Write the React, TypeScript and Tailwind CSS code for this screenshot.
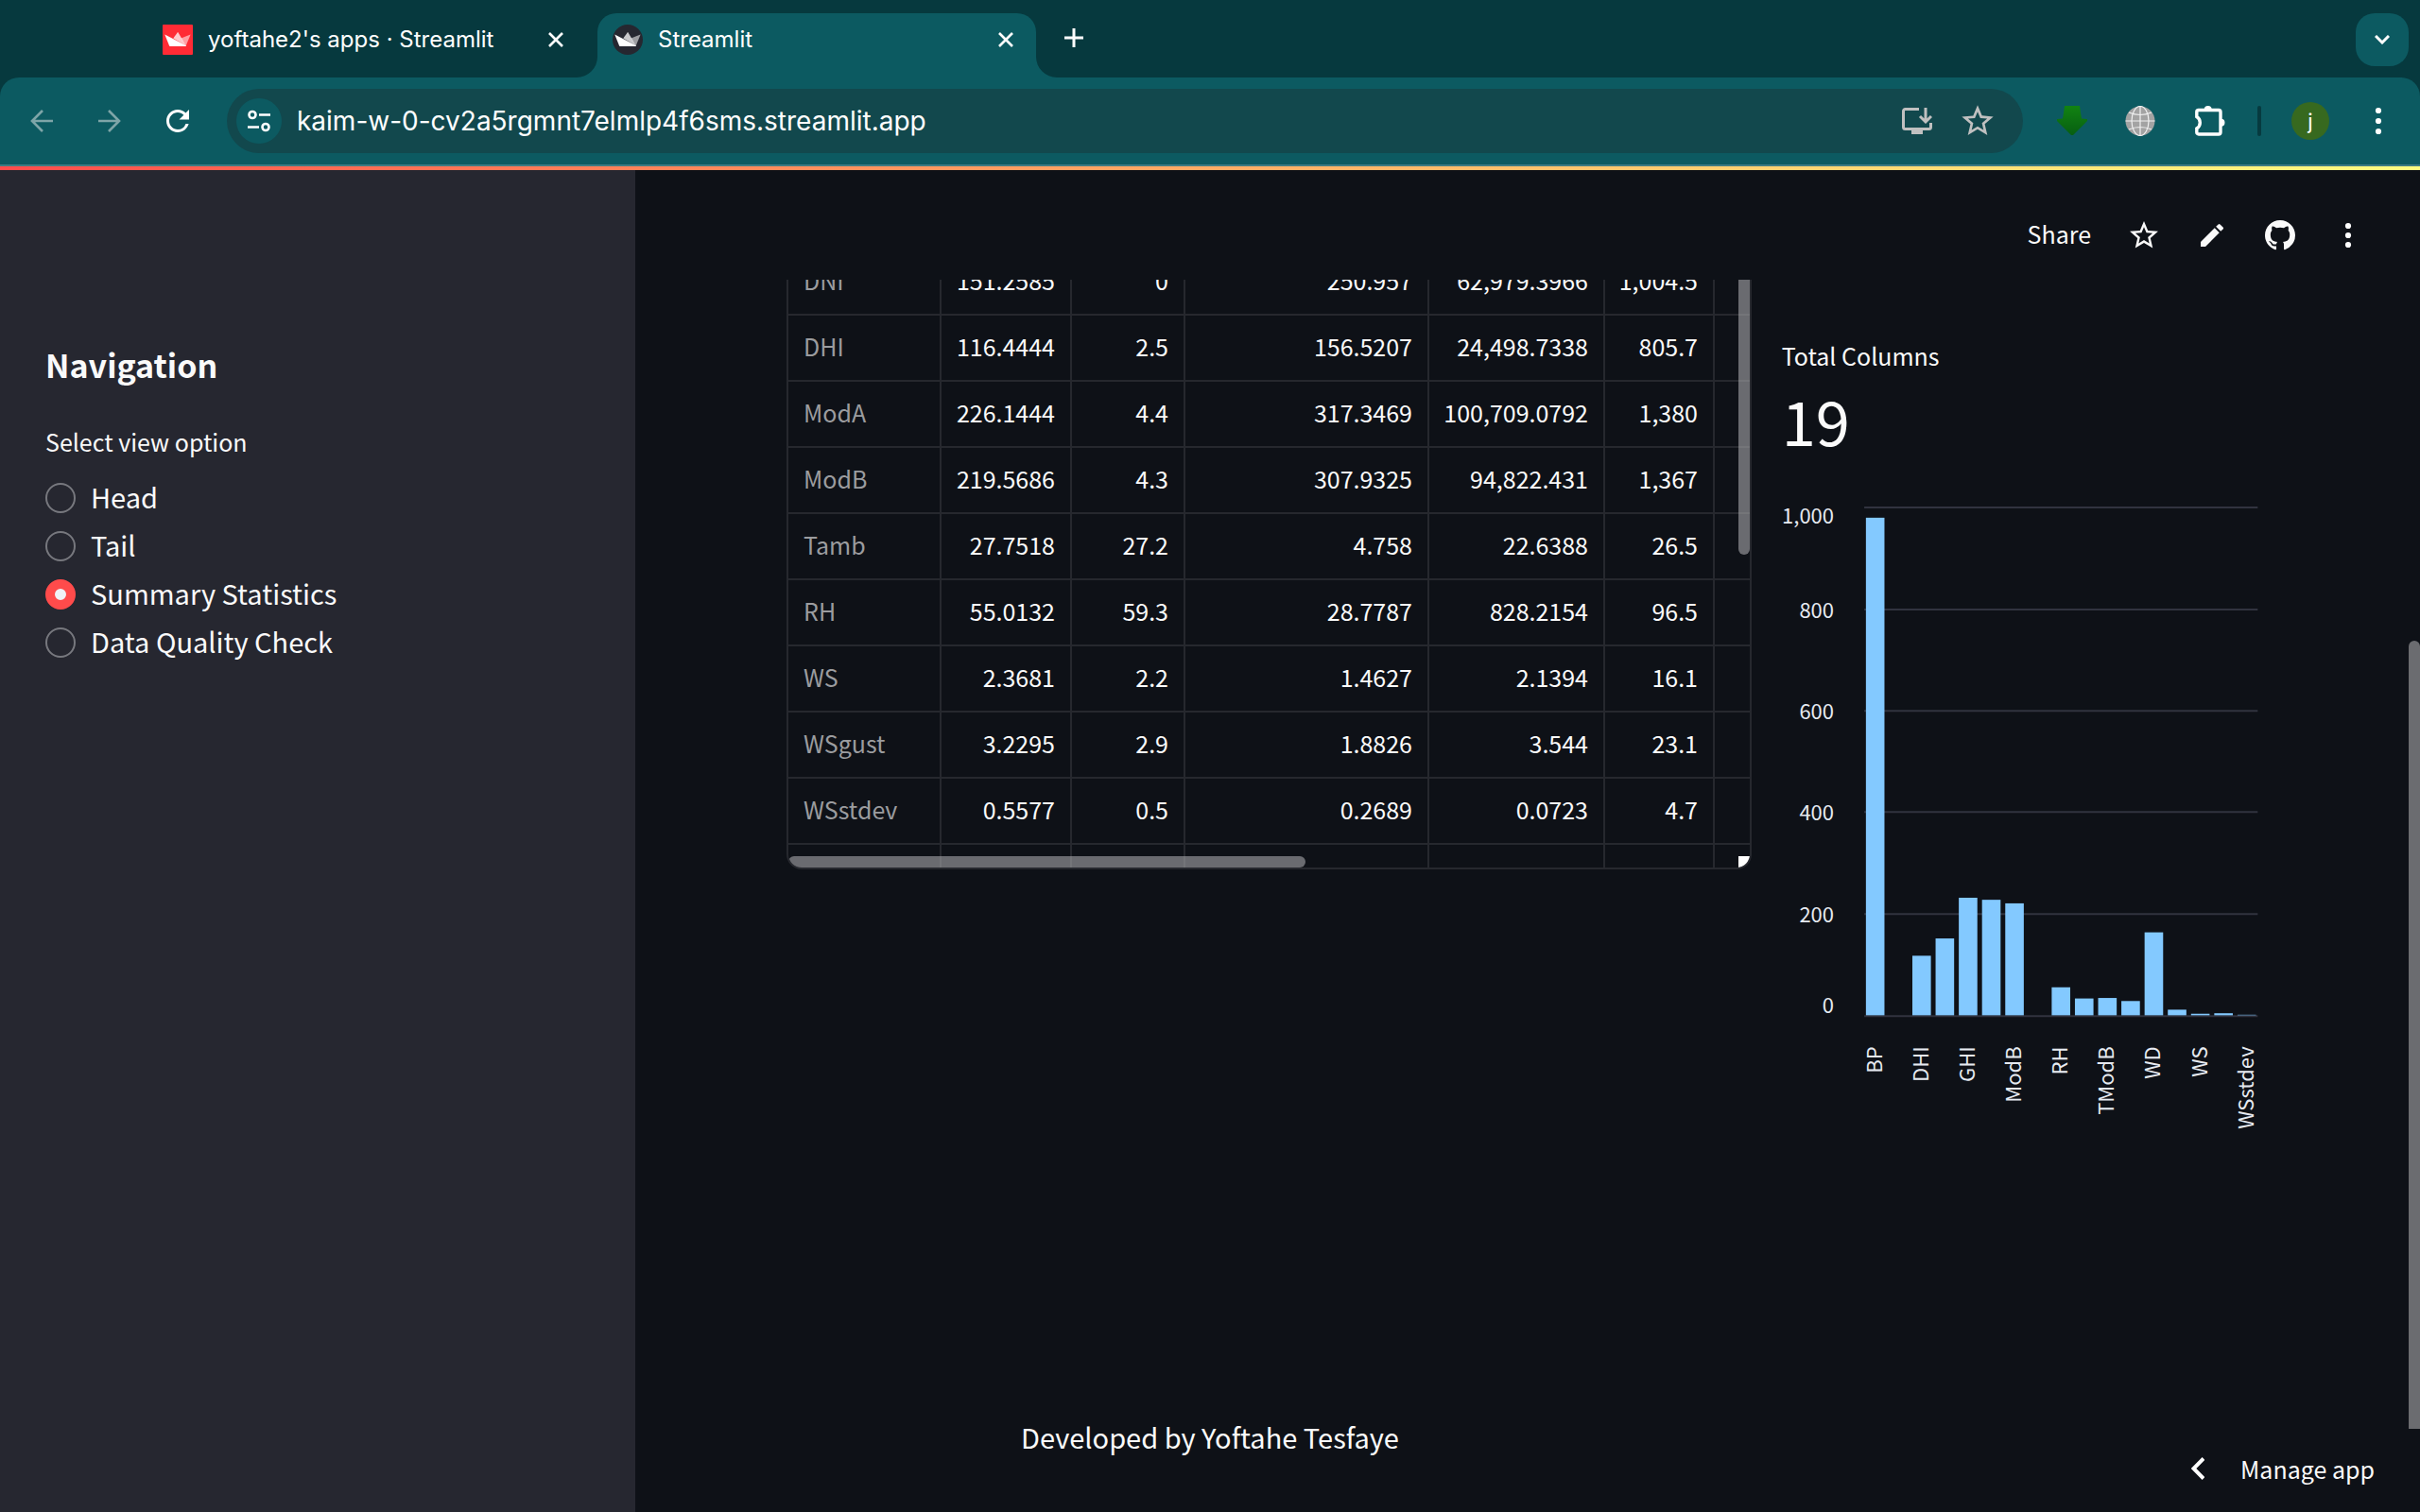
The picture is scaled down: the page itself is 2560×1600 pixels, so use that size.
import { useState, type ReactNode } from "react";
import { MdEdit, MdRefresh, MdStarBorder } from "react-icons/md";

const stats: string[][] = [
  ["DNI", "151.2585", "0", "250.957", "62,979.3966", "1,004.5"],
  ["DHI", "116.4444", "2.5", "156.5207", "24,498.7338", "805.7"],
  ["ModA", "226.1444", "4.4", "317.3469", "100,709.0792", "1,380"],
  ["ModB", "219.5686", "4.3", "307.9325", "94,822.431", "1,367"],
  ["Tamb", "27.7518", "27.2", "4.758", "22.6388", "26.5"],
  ["RH", "55.0132", "59.3", "28.7787", "828.2154", "96.5"],
  ["WS", "2.3681", "2.2", "1.4627", "2.1394", "16.1"],
  ["WSgust", "3.2295", "2.9", "1.8826", "3.544", "23.1"],
  ["WSstdev", "0.5577", "0.5", "0.2689", "0.0723", "4.7"],
  ["WD", "", "", "", "", ""],
];

const bars = [
  { name: "BP", value: 978 },
  { name: "", value: 0 },
  { name: "DHI", value: 117 },
  { name: "", value: 151 },
  { name: "GHI", value: 231 },
  { name: "", value: 227 },
  { name: "ModB", value: 220 },
  { name: "", value: 0 },
  { name: "RH", value: 55 },
  { name: "", value: 33 },
  { name: "TModB", value: 34 },
  { name: "", value: 28 },
  { name: "WD", value: 163 },
  { name: "", value: 11 },
  { name: "WS", value: 3 },
  { name: "", value: 4 },
  { name: "WSstdev", value: 1 },
];

const ticks = [
  { label: "1,000", line: 1, text: 18 },
  { label: "800", line: 109, text: 118 },
  { label: "600", line: 216, text: 225 },
  { label: "400", line: 323, text: 332 },
  { label: "200", line: 431, text: 440 },
  { label: "0", line: 539, text: 536 },
];

const views = ["Head", "Tail", "Summary Statistics", "Data Quality Check"];

function Crown({ round = false }: { round?: boolean }) {
  return (
    <svg viewBox="0 0 32 32" className="size-8 shrink-0" aria-hidden="true">
      {round ? <circle cx="16" cy="16" r="16" fill="#262730" /> : <rect width="32" height="32" rx="1" fill="#ff2b35" />}
      <path d="M29.6 10.4 24.8 22.3 19.4 14.4Z" fill="#fff" opacity=".55" />
      <path d="M11.3 14.6 15.7 8.4q.4-.5.8 0L25 22.4Z" fill="#fff" opacity=".75" />
      <path d="M2.3 10.6 25 22.2q-.3.9-1.4.9H8.4q-1 0-1.4-.9Z" fill="#fff" />
    </svg>
  );
}

function Cross() {
  return (
    <svg viewBox="0 0 16 16" className="size-4" fill="none" stroke="#fff" strokeWidth="2.6" aria-hidden="true">
      <path d="M1 1l14 14M15 1 1 15" />
    </svg>
  );
}

function Github() {
  return (
    <svg viewBox="0 0 16 16" className="size-8" fill="currentColor" aria-hidden="true">
      <path d="M8 0C3.58 0 0 3.58 0 8c0 3.54 2.29 6.53 5.47 7.59.4.07.55-.17.55-.38 0-.19-.01-.82-.01-1.49-2.01.37-2.53-.49-2.69-.94-.09-.23-.48-.94-.82-1.13-.28-.15-.68-.52-.01-.53.63-.01 1.08.58 1.23.82.72 1.21 1.87.87 2.33.66.07-.52.28-.87.51-1.07-1.78-.2-3.64-.89-3.64-3.95 0-.87.31-1.59.82-2.15-.08-.2-.36-1.02.08-2.12 0 0 .67-.21 2.2.82.64-.18 1.32-.27 2-.27s1.36.09 2 .27c1.53-1.04 2.2-.82 2.2-.82.44 1.1.16 1.92.08 2.12.51.56.82 1.27.82 2.15 0 3.07-1.87 3.75-3.65 3.95.29.25.54.73.54 1.48 0 1.07-.01 1.93-.01 2.2 0 .21.15.46.55.38A8.01 8.01 0 0 0 16 8c0-4.42-3.58-8-8-8Z" />
    </svg>
  );
}

function Dots({ step }: { step: number }) {
  return (
    <svg viewBox="0 0 32 32" className="size-8" fill="#fff" aria-hidden="true">
      <circle cx="16" cy={16 - step} r="3.1" />
      <circle cx="16" cy="16" r="3.1" />
      <circle cx="16" cy={16 + step} r="3.1" />
    </svg>
  );
}

function IconButton({ label, className = "", children }: { label: string; className?: string; children: ReactNode }) {
  return (
    <button type="button" aria-label={label} className={`flex shrink-0 items-center justify-center ${className}`}>
      {children}
    </button>
  );
}

function TabStrip() {
  return (
    <div className="flex h-[82px] pt-[14px] pr-3 pl-[156px] text-[24px] text-white">
      <div className="flex w-[456px] items-center justify-between px-4 pb-3">
        <button type="button" className="flex items-center gap-4">
          <Crown />
          <span className="leading-8 whitespace-nowrap">yoftahe2's apps · Streamlit</span>
        </button>
        <IconButton label="Close tab">
          <Cross />
        </IconButton>
      </div>
      <div className="relative ml-5 flex w-[464px] items-center justify-between rounded-t-[20px] bg-[#0c5a61] pr-6 pb-3 pl-4">
        <svg viewBox="0 0 22 22" className="absolute bottom-0 -left-[22px] size-[22px]" fill="#0c5a61" aria-hidden="true">
          <path d="M22 0A22 22 0 0 1 0 22H22Z" />
        </svg>
        <svg viewBox="0 0 22 22" className="absolute -right-[22px] bottom-0 size-[22px]" fill="#0c5a61" aria-hidden="true">
          <path d="M0 0A22 22 0 0 0 22 22H0Z" />
        </svg>
        <button type="button" className="flex items-center gap-4">
          <Crown round />
          <span className="leading-8">Streamlit</span>
        </button>
        <IconButton label="Close tab">
          <Cross />
        </IconButton>
      </div>
      <IconButton label="New tab" className="ml-5 h-[52px] w-10">
        <svg viewBox="0 0 20 20" className="size-5" stroke="#fff" strokeWidth="3" aria-hidden="true">
          <path d="M10 0V20M0 10H20" />
        </svg>
      </IconButton>
      <IconButton label="Search tabs" className="ml-auto size-14 rounded-[20px] bg-[#0c5a61]">
        <svg viewBox="0 0 16 10" className="h-[10px] w-4" fill="none" stroke="#fff" strokeWidth="3" aria-hidden="true">
          <path d="M1 1l7 7 7-7" />
        </svg>
      </IconButton>
    </div>
  );
}

function Toolbar() {
  return (
    <div className="flex h-[94px] items-center rounded-t-[20px] border-b-2 border-[#3e7b82] bg-[#0c5a61] pr-7 pl-6">
      <div className="flex gap-8">
        <IconButton label="Back" className="w-10">
          <svg viewBox="0 0 24 24" className="size-6" fill="none" stroke="#7ea5a8" strokeWidth="2.6" aria-hidden="true">
            <path d="M24 12H2M13 1 2 12l11 11" />
          </svg>
        </IconButton>
        <IconButton label="Forward" className="w-10">
          <svg viewBox="0 0 24 24" className="size-6" fill="none" stroke="#7ea5a8" strokeWidth="2.6" aria-hidden="true">
            <path d="M0 12H22M11 1l11 11-11 11" />
          </svg>
        </IconButton>
        <IconButton label="Reload" className="w-10">
          <MdRefresh className="size-9 text-white" />
        </IconButton>
      </div>
      <div className="ml-8 flex h-[68px] min-w-0 flex-1 items-center rounded-full bg-[#12484d] pr-7 pl-[10px]">
        <IconButton label="View site information" className="size-12 rounded-full bg-[#0c5a61]">
          <svg viewBox="0 0 24 24" className="size-6" fill="none" stroke="#fff" strokeWidth="2.6" aria-hidden="true">
            <circle cx="5" cy="5.5" r="3.5" />
            <path d="M12 5.500H24M0 18.500H12" />
            <circle cx="19" cy="18.500" r="3.500" />
          </svg>
        </IconButton>
        <input
          aria-label="Address"
          readOnly
          value="kaim-w-0-cv2a5rgmnt7elmlp4f6sms.streamlit.app"
          className="ml-4 min-w-0 flex-1 bg-transparent text-[28px] leading-9 text-white outline-none"
        />
        <IconButton label="Install app">
          <svg viewBox="0 0 32 32" className="size-8" fill="none" stroke="#c0c0c0" strokeWidth="3" aria-hidden="true">
            <path d="M18 3.500H3.500a2 2 0 0 0-2 2v17a2 2 0 0 0 2 2h25a2 2 0 0 0 2-2V18" />
            <path d="M25 2v14M19 11l6 6 6-6" />
            <path d="M10 28H22" strokeWidth="4" />
          </svg>
        </IconButton>
        <IconButton label="Bookmark this tab" className="ml-7">
          <MdStarBorder className="size-10 text-[#c0c0c0]" />
        </IconButton>
      </div>
      <IconButton label="Download extension" className="ml-9">
        <svg viewBox="0 0 32 32" className="size-8" aria-hidden="true">
          <defs>
            <linearGradient id="arrow" x1="0" y1="0" x2="0" y2="1">
              <stop offset="0" stopColor="#128312" />
              <stop offset="1" stopColor="#075e12" />
            </linearGradient>
          </defs>
          <path d="M8 0H24q1 8 2 13.500l6 .5v2L17 31H15L0 16V14l6-.5Q7 8 8 0Z" fill="url(#arrow)" />
        </svg>
      </IconButton>
      <IconButton label="Globe extension" className="ml-10">
        <svg viewBox="0 0 32 32" className="size-8" fill="none" stroke="#f0f0f0" strokeWidth="1.2" aria-hidden="true">
          <circle cx="16" cy="16" r="15.500" fill="#a3a3a3" stroke="none" />
          <path d="M16 .5V31.500M.5 16H31.500M4 7q12 5 24 0M4 25q12-5 24 0" />
          <ellipse cx="16" cy="16" rx="9" ry="15.500" />
        </svg>
      </IconButton>
      <IconButton label="Extensions" className="ml-10">
        <svg viewBox="0 0 36 36" className="size-9" fill="none" stroke="#fff" strokeWidth="3.4" aria-hidden="true">
          <path d="M3.800 13.500V8.500a2 2 0 0 1 2-2H27a2 2 0 0 1 2 2V30a2 2 0 0 1-2 2H5.800a2 2 0 0 1-2-2V26q3.500-2 3.500-6.200t-3.500-6.300Z" />
          <path d="M11.700 6a4 4 0 0 1 8 0ZM29.500 15.800a4 4 0 0 1 0 8Z" fill="#fff" stroke="none" />
        </svg>
      </IconButton>
      <span className="ml-8 h-8 w-1 rounded-full bg-[#063a3f]" />
      <IconButton label="Profile" className="ml-8 size-10 rounded-full bg-[#37691f] text-[22px] leading-8 text-white">
        j
      </IconButton>
      <IconButton label="Browser menu" className="ml-9">
        <Dots step={11} />
      </IconButton>
    </div>
  );
}

function Sidebar() {
  const [view, setView] = useState(views[2]);
  return (
    <aside className="w-[672px] shrink-0 bg-[#262730] px-12 pt-[182px]">
      <h2 className="text-[34px] leading-[48px] font-bold">Navigation</h2>
      <fieldset className="mt-[37px]">
        <legend className="mb-[14px] text-[25px] leading-10">Select view option</legend>
        {views.map((name) => (
          <label key={name} className="flex h-[51px] items-center gap-4">
            <input
              type="radio"
              name="view"
              checked={view === name}
              onChange={() => setView(name)}
              className="size-8 appearance-none rounded-full border-2 border-[#77787e] bg-[#262730] checked:border-[10px] checked:border-[#ff4b4b] checked:bg-[#f0f2f6]"
            />
            <span className="pb-1 text-[29px] leading-10">{name}</span>
          </label>
        ))}
      </fieldset>
    </aside>
  );
}

function AppHeader() {
  return (
    <header className="flex h-[116px] shrink-0 items-center justify-end pt-[22px] pr-[58px]">
      <button type="button" className="mr-[38px] pb-1 text-[25px] leading-8">
        Share
      </button>
      <div className="flex items-center gap-9">
        <IconButton label="Favorite" className="w-9">
          <MdStarBorder className="size-9" />
        </IconButton>
        <IconButton label="Edit" className="w-9">
          <MdEdit className="size-8" />
        </IconButton>
        <IconButton label="View source" className="w-9">
          <Github />
        </IconButton>
        <IconButton label="Main menu" className="w-9">
          <Dots step={10} />
        </IconButton>
      </div>
    </header>
  );
}

function StatsTable() {
  return (
    <div className="relative h-[624px] overflow-hidden rounded-b-2xl border-x-2 border-b-2 border-[#26282e]">
      <table className="-mt-8 w-full table-fixed border-separate border-spacing-0 text-right text-[25px] leading-8">
        <colgroup>
          <col className="w-[162px]" />
          <col className="w-[138px]" />
          <col className="w-[120px]" />
          <col className="w-[258px]" />
          <col className="w-[186px]" />
          <col className="w-[116px]" />
          <col />
        </colgroup>
        <tbody>
          {stats.map((row) => (
            <tr key={row[0]} className="h-[70px]">
              <th
                scope="row"
                className="border-r-2 border-b-2 border-[#26282e] pb-1 pl-4 text-left font-normal text-[#9b9c9f]"
              >
                {row[0]}
              </th>
              {row.slice(1).map((cell, i) => (
                <td key={i} className="border-r-2 border-b-2 border-[#26282e] pr-4 pb-1 whitespace-nowrap">
                  {cell}
                </td>
              ))}
              <td className="border-b-2 border-[#26282e]" />
            </tr>
          ))}
        </tbody>
      </table>
      <span className="absolute top-0 right-0 h-[291px] w-3 rounded-b-full bg-[#a9a9ab]/60" />
      <span className="absolute bottom-0 left-0 h-3 w-[547px] rounded-full bg-[#a9a9ab]/60" />
      <span className="absolute right-0 bottom-0 size-3 bg-white" />
    </div>
  );
}

function MeanChart() {
  return (
    <svg viewBox="0 0 510 680" className="mt-[52px] w-full" fontSize="22" fill="#e6eaf1" role="img" aria-label="Mean by column">
      {ticks.map((t) => (
        <g key={t.label}>
          <path d={`M87 ${t.line}H503`} stroke="#31333f" strokeWidth="2" />
          <text x="55" y={t.text} textAnchor="end">
            {t.label}
          </text>
        </g>
      ))}
      {bars.map((b, i) => {
        const center = 98.6 + i * 24.55;
        const height = b.value * 0.538;
        return (
          <g key={i}>
            <rect x={center - 9.8} y={538 - height} width="19.6" height={height} fill="#83c9ff" />
            {b.name && (
              <text transform={`translate(${center + 7} 571) rotate(-90)`} textAnchor="end">
                {b.name}
              </text>
            )}
          </g>
        );
      })}
    </svg>
  );
}

export default function App() {
  return (
    <div className="flex h-screen flex-col overflow-hidden bg-[#06393e] font-['Inter',sans-serif]">
      <TabStrip />
      <Toolbar />
      <div className="h-1 shrink-0 bg-linear-to-r from-[#ff4b4b] to-[#fffd80]" />
      <div className="relative flex min-h-0 flex-1 bg-[#0e1117] font-['Noto_Sans_CJK_SC',sans-serif] text-[#fafafa]">
        <Sidebar />
        <main className="flex min-w-0 flex-1 flex-col">
          <AppHeader />
          <div className="grid min-h-0 flex-1 grid-cols-[2fr_1fr] gap-8 pr-[165px] pl-[160px]">
            <StatsTable />
            <section className="pt-[60px]">
              <h3 className="text-[25px] leading-10">Total Columns</h3>
              <p className="mt-2 text-[65px] leading-[80px]">19</p>
              <MeanChart />
            </section>
          </div>
          <footer className="pr-[672px] text-center text-[29px] leading-10">Developed by Yoftahe Tesfaye</footer>
          <div className="flex h-[60px] items-center justify-end pr-12 pb-8">
            <button type="button" className="flex items-center gap-[38px] text-[25px] leading-7">
              <svg viewBox="0 0 14 24" className="h-6 w-[14px]" fill="none" stroke="#fff" strokeWidth="4" aria-hidden="true">
                <path d="M13 1.500 2.500 12 13 22.500" />
              </svg>
              Manage app
            </button>
          </div>
        </main>
        <span className="absolute top-[498px] right-0 h-[834px] w-3 rounded-t-md bg-[#6b6c70]" />
      </div>
    </div>
  );
}
